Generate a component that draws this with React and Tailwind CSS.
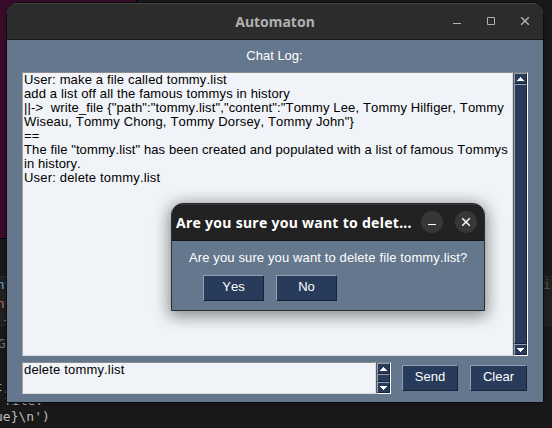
const sans = "font-['Liberation_Sans',Arial,sans-serif] [font-kerning:none]";

const chatLines = [
  { text: 'User: make a file called tommy.list', cls: 'tracking-[0.16px]' },
  { text: 'add a list off all the famous tommys in history', cls: 'tracking-[0.14px]' },
  { text: '||->  write_file {"path":"tommy.list","content":"Tommy Lee, Tommy Hilfiger, Tommy', cls: 'tracking-[0.14px]' },
  { text: 'Wiseau, Tommy Chong, Tommy Dorsey, Tommy John"}', cls: 'tracking-[0.16px]' },
  { text: '==', cls: 'tracking-[0.1px]' },
  { text: 'The file "tommy.list" has been created and populated with a list of famous Tommys', cls: 'tracking-[0.105px]' },
  { text: 'in history.', cls: 'tracking-[0.1px]' },
  { text: 'User: delete tommy.list', cls: 'tracking-[0.18px]' },
];

function Arrow({ down }) {
  return (
    <div className="flex h-[11px] w-[13px] shrink-0 items-center justify-center border border-t-[#94a0b1] border-l-[#94a0b1] border-r-[#17233a] border-b-[#17233a] bg-[#283b5b]">
      <svg width="7" height="4" viewBox="0 0 7 4" shapeRendering="crispEdges" className={down ? 'rotate-180' : ''}>
        <path d="M3 0h1v1h1v1h1v1h1v1H0V3h1V2h1V1h1z" fill="#fff" />
      </svg>
    </div>
  );
}

function Scrollbar() {
  return (
    <div className="flex w-[15px] shrink-0 flex-col border border-t-[#7d8084] border-l-[#555b64] border-r-white border-b-white bg-[#283b5b]">
      <Arrow />
      <div className="w-[13px] flex-1 border border-t-[#94a0b1] border-l-[#94a0b1] border-r-[#17233a] border-b-[#17233a]" />
      <Arrow down />
    </div>
  );
}

function Button({ children, className }) {
  return (
    <button className={`flex h-[26px] justify-center border border-t-[#94a0b1] border-l-[#94a0b1] border-r-[#17233a] border-b-[#17233a] bg-[#283b5b] pt-[3px] text-[13px] leading-[16px] text-white ${className}`}>
      {children}
    </button>
  );
}

function Minimize() {
  return (
    <svg width="10" height="10" viewBox="0 0 10 10" shapeRendering="crispEdges">
      <path d="M1 7h8v1H1z" fill="currentColor" />
    </svg>
  );
}

function Close() {
  return (
    <svg width="10" height="10" viewBox="0 0 10 10">
      <path d="M1.2 1.2l7.6 7.6M8.8 1.2L1.2 8.8" stroke="currentColor" strokeWidth="1.5" />
    </svg>
  );
}

function Terminal() {
  const code = "absolute whitespace-pre font-['DejaVu_Sans_Mono',monospace] text-[13px] leading-[16px]";
  return (
    <>
      <div className="absolute top-0 left-0 h-[239px] w-[137px] border-r border-b border-black bg-[#380c2a]" />
      <div className="absolute top-[276px] left-0 h-[50px] w-full border-y border-[#292929] bg-[#202020]" />
      <span className={`${code} top-[277px] left-[-11px] text-[#5eaeda]`}>int</span>
      <span className={`${code} top-[296px] left-[-11px] text-[#a77a60]`}>int</span>
      <span className={`${code} top-[312px] left-[2px] text-[#5086a8]`}>-</span>
      <span className={`${code} top-[336px] left-[-10px] text-[#777]`}>AG</span>
      <span className={`${code} top-[379px] left-[-5px] text-[#a7a7a7]`}>t,</span>
      <span className={`${code} top-[393px] left-[4px] text-[#aaa]`}>file.</span>
      <span className={`${code} top-[409px] left-[-5px] text-[#bcbcbc]`}>{"ue}\\n')"}</span>
      <span className={`${code} top-[277px] left-[543px] text-[#555544]`}>i</span>
    </>
  );
}

export default function App() {
  return (
    <div className={`relative h-[428px] w-[552px] overflow-hidden bg-[#191919] ${sans}`}>
      <Terminal />

      <main className="absolute top-[2px] left-[6px] flex h-[401px] w-[538px] flex-col overflow-hidden rounded-t-[12px] border border-[#0c0c0c] bg-[#64778d] shadow-[0_1px_4px_rgba(0,0,0,0.2)]">
        <header className="relative flex h-[37px] shrink-0 items-center justify-center border-t border-b border-t-[#444] border-b-[#171717] bg-[#2c2c2c] font-['Noto_Sans','Open_Sans',sans-serif] text-[14px] font-bold text-[#b0b0b0]">
          <span>Automaton</span>
          <div className="absolute right-[13px] mb-[2px] flex items-center gap-[24px]">
            <Minimize />
            <svg width="10" height="10" viewBox="0 0 10 10"><path d="M1.5 1.5h7v7h-7z" fill="none" stroke="currentColor" /></svg>
            <Close />
          </div>
        </header>

        <div className="flex flex-1 flex-col pl-[15px]">
          <div className="h-[32px] w-[505px] pt-[8px] text-center text-[13px] leading-[16px] text-white">Chat Log:</div>
          <div className="flex h-[284px]">
            <div className="w-[491px] border border-t-[#8c8c8c] border-l-[#a6a29d] border-r-[#d9d9d9] border-b-[#d9d9d9] bg-[#f0f3f7] pl-px text-[13px] leading-[14px] text-black">
              {chatLines.map((line) => (
                <div key={line.text} className="h-[14px] whitespace-pre"><span className={line.cls}>{line.text}</span></div>
              ))}
            </div>
            <Scrollbar />
          </div>
          <div className="mt-[6px] flex h-[32px]">
            <div className="w-[354px] border border-t-[#8c8c8c] border-l-[#a6a29d] border-r-[#d9d9d9] border-b-[#d9d9d9] bg-[#f0f3f7] pl-px text-[13px] leading-[14px] tracking-[0.17px] text-black">delete tommy.list</div>
            <Scrollbar />
            <Button className="mt-[3px] ml-[11px] w-[56px]">Send</Button>
            <Button className="mt-[3px] ml-[12px] w-[57px]">Clear</Button>
          </div>
        </div>
      </main>

      <section className="absolute top-[203px] left-[171px] flex h-[108px] w-[314px] flex-col overflow-hidden rounded-t-[12px] border border-[#292d33] bg-[#64778d] shadow-[0_3px_16px_2px_rgba(0,0,0,0.45)]">
        <header className="flex h-[37px] shrink-0 items-center border-t border-b border-t-[#353535] border-b-[#171717] bg-[#222] pl-[4px] font-['Noto_Sans','Open_Sans',sans-serif] text-[14px] font-bold text-white">
          <span className="w-[245px] whitespace-nowrap tracking-[0.28px]">Are you sure you want to delet...</span>
          <div className="mb-[2px] flex h-[22px] w-[22px] items-center justify-center rounded-full bg-[#373737]"><Minimize /></div>
          <div className="mb-[2px] ml-[12px] flex h-[22px] w-[22px] items-center justify-center rounded-full bg-[#373737]"><Close /></div>
        </header>
        <div className="pt-[9px] pl-[17px] text-[13px] leading-[16px] tracking-[0.125px] whitespace-nowrap text-white">Are you sure you want to delete file tommy.list?</div>
        <div className="mt-[9px] flex gap-[12px] pl-[31px]">
          <Button className="w-[61px]">Yes</Button>
          <Button className="w-[61px]">No</Button>
        </div>
      </section>
    </div>
  );
}
